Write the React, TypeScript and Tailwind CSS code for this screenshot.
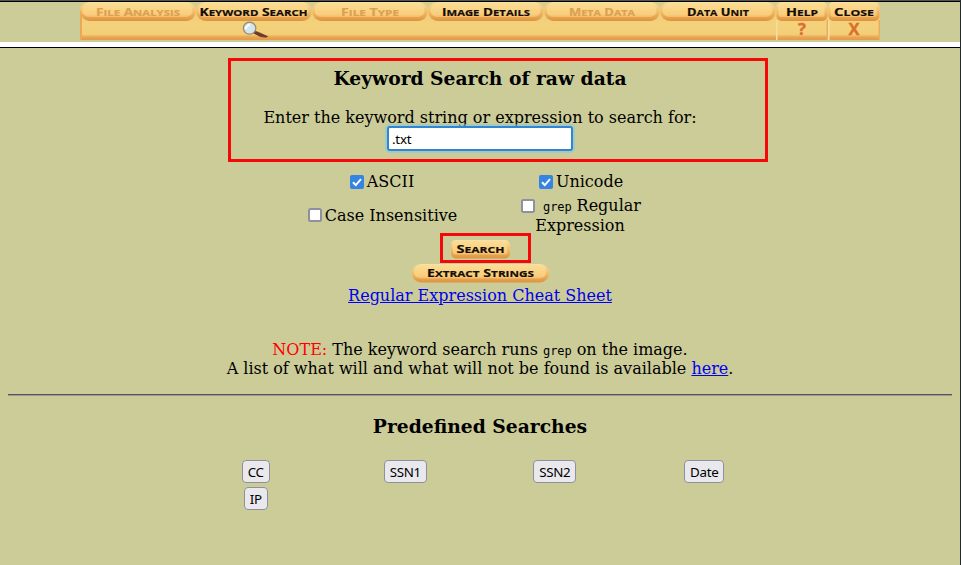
import React from "react";

type LabelProps = { text: string; cx: number; y: number; width: number; color: string; size?: number };

// Engraved small-capital lettering: a large initial, then smaller capitals.
function Label({ text, cx, y, width, color, size = 11.3 }: LabelProps) {
  return (
    <text
      x={cx - width / 2}
      y={y}
      textLength={width}
      lengthAdjust="spacingAndGlyphs"
      fill={color}
      stroke={color}
      strokeWidth={0.2}
      fontWeight={700}
      className="font-['Open_Sans',sans-serif] uppercase"
    >
      {text.split(" ").map((word, i) => (
        <React.Fragment key={word}>
          <tspan fontSize={size}>{(i ? "\u00a0" : "") + word[0]}</tspan>
          <tspan fontSize={size * 0.83}>{word.slice(1)}</tspan>
        </React.Fragment>
      ))}
    </text>
  );
}

function Pill({ x, y, w, h, r }: { x: number; y: number; w: number; h: number; r: number }) {
  return (
    <>
      <rect x={x} y={y} width={w} height={h} rx={r} fill="url(#edge)" />
      <rect x={x + 2} y={y + 2} width={w - 5} height={h - 6} rx={Math.max(r - 2.5, 2)} fill="url(#face)" />
    </>
  );
}

function Gradients() {
  return (
    <defs>
      <linearGradient id="edge" x1="0" y1="0" x2="0" y2="1">
        <stop offset="0" stopColor="#fbe2a4" />
        <stop offset="0.5" stopColor="#f3bd69" />
        <stop offset="1" stopColor="#de923e" />
      </linearGradient>
      <linearGradient id="face" x1="0" y1="0" x2="0" y2="1">
        <stop offset="0" stopColor="#fadc90" />
        <stop offset="0.8" stopColor="#f9cd7d" />
        <stop offset="1" stopColor="#f3bb66" />
      </linearGradient>
      <linearGradient id="base" x1="0" y1="0" x2="0" y2="1">
        <stop offset="0" stopColor="#d3cd92" />
        <stop offset="0.3" stopColor="#eccb78" />
        <stop offset="0.55" stopColor="#f4d27c" />
        <stop offset="0.85" stopColor="#f3ce78" />
        <stop offset="0.93" stopColor="#e8a452" />
        <stop offset="1" stopColor="#e39a48" />
      </linearGradient>
    </defs>
  );
}

const tabs = [
  { text: "File Analysis", width: 84, off: true },
  { text: "Keyword Search", width: 108, off: false },
  { text: "File Type", width: 58, off: true },
  { text: "Image Details", width: 88, off: false },
  { text: "Meta Data", width: 66, off: true },
  { text: "Data Unit", width: 62, off: false },
];

function Tab({ text, width, off, first }: { text: string; width: number; off: boolean; first: boolean }) {
  return (
    <svg width="116" height="38" viewBox="0 0 116 38" className="block">
      <Gradients />
      <rect width="116" height="38" fill="url(#base)" />
      {first && <rect y="8" width="2" height="30" fill="#eba953" />}
      <Pill x={0.5} y={0} w={115} h={19} r={9} />
      <Label text={text} cx={text === "Keyword Search" ? 57.5 : 58} y={13.7} width={width} color={off ? "#dda052" : "#140c04"} />
      {text === "Keyword Search" && (
        <g>
          <path d="M58 29l4 1.2 9.5 4.2-1.5.8-5.5-.6-7-3.6z" fill="#6d3927" stroke="#6d3927" strokeWidth="0.8" />
          <ellipse cx="53.6" cy="26.2" rx="6.2" ry="6" fill="#d3e6ef" stroke="#988872" strokeWidth="1.2" />
          <path d="M50 27a4 4 0 0 1 4-4" stroke="#fff" strokeWidth="2" fill="none" />
        </g>
      )}
    </svg>
  );
}

function SmallTab({ text, mark, width }: { text: string; mark: string; width: number }) {
  return (
    <svg width="52" height="38" viewBox="0 0 52 38" className="block">
      <Gradients />
      <rect width="52" height="38" fill="url(#base)" />
      <rect y="18" width="1.5" height="20" fill="#f9dca0" />
      <rect x="50.5" y="18" width="1.5" height="20" fill="#e9ad5c" />
      <Pill x={0.5} y={0} w={51} h={19} r={5} />
      <Label text={text} cx={26} y={13.7} width={width} color="#140c04" />
      <text
        x="26"
        y="33"
        textAnchor="middle"
        fontSize="16.5"
        fontWeight="700"
        fill="#dc6f2c"
        stroke="#dc6f2c"
        strokeWidth="0.4"
        className="font-['Open_Sans',sans-serif]"
      >
        {mark}
      </text>
    </svg>
  );
}

function ImageButton({ text, w, r, tw }: { text: string; w: number; r: number; tw: number }) {
  return (
    <button type="button" className="block">
      <svg width={w} height="19" viewBox={`0 0 ${w} 19`} className="block">
        <Gradients />
        <Pill x={0} y={0} w={w} h={18.5} r={r} />
        <Label text={text} cx={w / 2} y={13} width={tw} color="#140c04" />
      </svg>
    </button>
  );
}

function Check({ on = false }: { on?: boolean }) {
  return (
    <svg width="14" height="14" viewBox="0 0 14 14" className="block shrink-0">
      {on ? (
        <>
          <rect width="14" height="14" rx="2" fill="#3584e4" />
          <path d="M3 7.2l2.8 2.9L11 4.2" stroke="#fff" strokeWidth="2" fill="none" />
        </>
      ) : (
        <rect x="1" y="1" width="12" height="12" rx="1.5" fill="#fff" stroke="#8f8f9d" strokeWidth="2" />
      )}
    </svg>
  );
}

function Mono({ children }: { children: string }) {
  return (
    <span className="inline-block w-[28.5px] font-['DejaVu_Sans_Mono',monospace] text-[12px] leading-none tracking-[-0.1px]">
      {children}
    </span>
  );
}

export default function App() {
  return (
    <div className="relative h-[565px] w-[961px] overflow-hidden border-r border-[#222a30] bg-[#cccc99] font-['DejaVu_Serif',serif] text-[16px] leading-[19px] text-black">
      <div className="h-0.5 border-b border-black bg-[#55564a]" />
      <nav className="flex h-[38px] justify-center">
        {tabs.map((t, i) => (
          <Tab key={t.text} {...t} first={i === 0} />
        ))}
        <SmallTab text="Help" mark="?" width={32} />
        <SmallTab text="Close" mark="X" width={40} />
      </nav>
      <div className="mt-0.5 h-[6px] border-b border-black bg-white" />

      <main className="flex flex-col items-center">
        <h3 className="mt-[19px] text-[18.72px] leading-[22px] font-bold whitespace-nowrap">Keyword Search of raw data</h3>
        <label htmlFor="keyword" className="mt-[19px] whitespace-nowrap">
          Enter the keyword string or expression to search for:
        </label>
        <input
          id="keyword"
          defaultValue=".txt"
          className="-mt-px h-[25px] w-[186px] rounded-[3px] border-2 border-[#3584d0] bg-white px-[3px] font-['Noto_Sans',sans-serif] text-[13.33px] leading-[19px] tracking-[-0.2px] shadow-[0_0_0_2px_#7cc8e88c] outline-none"
        />

        <div className="mt-[21px] grid h-[63px] w-[398px] grid-cols-2 grid-rows-[24px_40px] pl-[2px]">
          <label className="flex h-[19px] items-center justify-center gap-[3px]">
            <Check on />
            ASCII
          </label>
          <label className="flex h-[19px] items-center justify-center gap-[3px] pl-[2px]">
            <Check on />
            Unicode
          </label>
          <label className="flex h-[38px] items-center justify-center gap-[3px] pl-px">
            <Check />
            Case Insensitive
          </label>
          <label className="h-10 pl-[2px] text-center leading-5">
            <span className="flex h-5 items-center justify-center whitespace-nowrap">
              <Check />
              <span className="ml-2">
                <Mono>grep</Mono> Regular
              </span>
            </span>
            <span className="block h-5 pr-[2px]">Expression</span>
          </label>
        </div>

        <div className="mt-[5px] pl-px">
          <ImageButton text="Search" w={59} r={5} tw={48} />
        </div>
        <div className="mt-[5px]">
          <ImageButton text="Extract Strings" w={137} r={9} tw={107} />
        </div>
        <a href="#cheat" className="mt-[3px] text-[#0000ee] underline">
          Regular Expression Cheat Sheet
        </a>

        <p className="mt-[35px] text-center whitespace-nowrap">
          <span className="block h-[19px]">
            <span className="text-[#ff0000]">NOTE:</span> The keyword search runs <Mono>grep</Mono> on the image.
          </span>
          <span className="block h-[19px]">
            A list of what will and what will not be found is available{" "}
            <a href="#here" className="text-[#0000ee] underline">
              here
            </a>
            .
          </span>
        </p>
        <hr className="mt-4 h-0.5 w-[944px] border-0 border-t border-[#55555f] bg-[#9b9b91]" />

        <h3 className="mt-[19px] text-[18.72px] leading-[22px] font-bold">Predefined Searches</h3>
        <div className="mt-[23px] grid w-[598px] grid-cols-4 justify-items-center gap-y-1">
          {["CC", "SSN1", "SSN2", "Date", "IP"].map((s) => (
            <button
              key={s}
              type="button"
              className="h-[23px] rounded-[4px] border border-[#8f8f9d] bg-[#e9e9ed] px-[5px] font-['Noto_Sans',sans-serif] text-[13.33px] leading-[22px] tracking-[-0.3px]"
            >
              {s}
            </button>
          ))}
        </div>
      </main>

      <div className="pointer-events-none absolute top-[58px] left-[228px] h-[104px] w-[540px] border-3 border-[#f50808]" />
      <div className="pointer-events-none absolute top-[233px] left-[440px] h-[30px] w-[91px] border-3 border-[#f50808]" />
    </div>
  );
}
